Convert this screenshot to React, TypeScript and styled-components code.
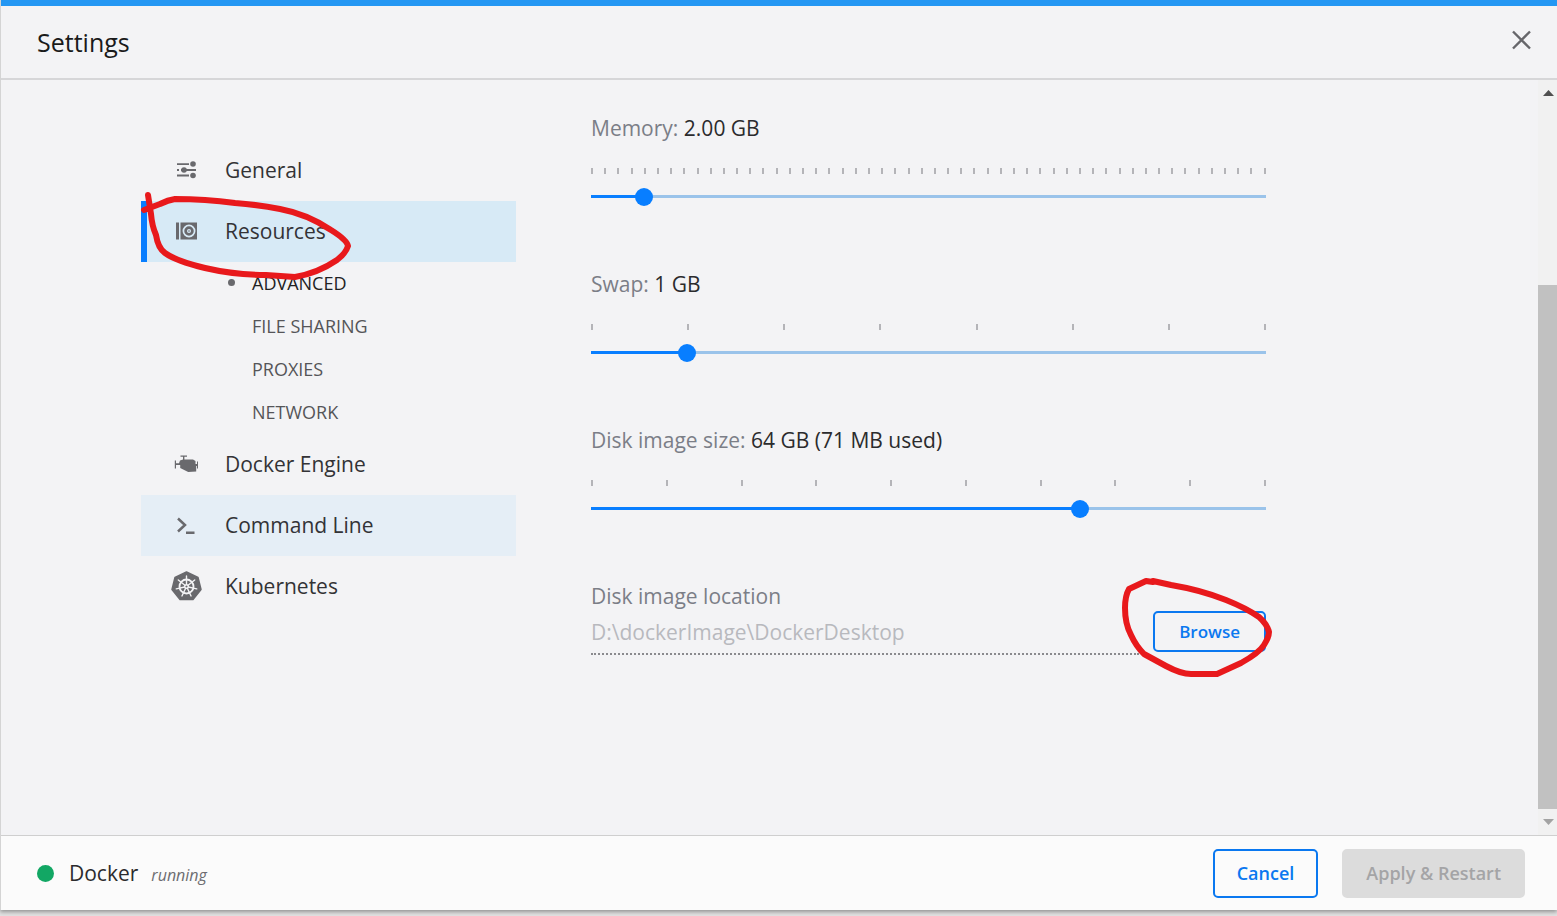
import React, { useState } from 'react';
import styled, { createGlobalStyle, css } from 'styled-components';

const GlobalStyle = createGlobalStyle`
  * { box-sizing: border-box; }
  body {
    margin: 0;
    background: #e2e2e2;
    color: #2b2b2d;
    font-family: 'Open Sans', 'Noto Sans', sans-serif;
    font-size: 21px;
    line-height: 30px;
    font-weight: 400;
  }
  button, input { font-family: inherit; }
`;

const Screen = styled.div`
  min-height: 100vh;
  display: flex;
  flex-direction: column;
  padding-bottom: 6px;
`;

const Window = styled.div`
  flex: 1;
  display: flex;
  flex-direction: column;
  border-left: 1px solid #d4d4d4;
  background: #f3f3f5;
  box-shadow: 0 2px 4px rgba(0, 0, 0, 0.35);
`;

const Header = styled.header`
  display: flex;
  align-items: center;
  justify-content: space-between;
  height: 80px;
  padding: 0 25px 0 36px;
  border-top: 6px solid #2497f3;
  border-bottom: 2px solid #d6d6d8;
`;

const Title = styled.h1`
  margin: 0;
  font-size: 25px;
  line-height: 32px;
  font-weight: 400;
  color: #1a1a1a;
`;

const CloseButton = styled.button`
  display: flex;
  padding: 0 0 5px;
  border: 0;
  background: none;
  color: #66666a;
  cursor: pointer;
`;

const Body = styled.div`
  flex: 1;
  display: flex;
`;

const Content = styled.div`
  flex: 1;
  display: flex;
  gap: 75px;
  padding: 33px 24px 48px 140px;
`;

const Nav = styled.nav`
  flex: 0 0 375px;
  padding-top: 27px;
`;

const List = styled.ul`
  margin: 0;
  padding: 0;
  list-style: none;
`;

const NavItem = styled.li`
  position: relative;
`;

const NavLink = styled.a<{ $state?: 'active' | 'hover' }>`
  display: flex;
  align-items: center;
  height: 61px;
  padding: 0 0 1px 23px;
  border-left: 6px solid transparent;
  color: #333336;
  text-decoration: none;
  ${({ $state }) => $state === 'active' && css`
    background: #d7eaf6;
    border-left-color: #087eff;
  `}
  ${({ $state }) => $state === 'hover' && css`
    background: #e5eef6;
    border-left-color: #e5eef6;
  `}
`;

const NavIcon = styled.svg`
  width: 32px;
  height: 32px;
  margin-right: 23px;
  color: #69696d;
`;

const SubLink = styled.a<{ $current?: boolean }>`
  display: flex;
  align-items: center;
  height: 43px;
  padding: 0 0 2px 111px;
  font-size: 18px;
  line-height: 24px;
  color: ${({ $current }) => ($current ? '#222224' : '#555558')};
  text-decoration: none;
  ${({ $current }) => $current && css`
    padding-left: 87px;
    &::before {
      content: '';
      width: 7px;
      height: 7px;
      margin-right: 17px;
      border-radius: 50%;
      background: #69696d;
    }
  `}
`;

const Panel = styled.main`
  flex: 1;
  max-width: 675px;
`;

const Field = styled.div`
  display: flex;
  flex-direction: column;
  margin-bottom: 63px;
`;

const Label = styled.label`
  color: #7b7e87;
`;

const Value = styled.span`
  color: #2b2b2d;
`;

const Ticks = styled.div`
  display: flex;
  justify-content: space-between;
  margin: 25px 0 14px;
`;

const Tick = styled.span`
  width: 2px;
  height: 6px;
  background: #b4b4b8;
`;

const Range = styled.input<{ $ratio: number }>`
  appearance: none;
  width: calc(100% + 18px);
  height: 18px;
  margin: 0 -9px;
  background: linear-gradient(
    to right,
    transparent 9px,
    #087eff 9px,
    #087eff ${({ $ratio }) => `calc(9px + (100% - 18px) * ${$ratio})`},
    #9ac3ea ${({ $ratio }) => `calc(9px + (100% - 18px) * ${$ratio})`},
    #9ac3ea calc(100% - 9px),
    transparent calc(100% - 9px)
  ) 0 7px / 100% 3px no-repeat;
  cursor: pointer;
  &::-webkit-slider-thumb {
    appearance: none;
    width: 18px;
    height: 18px;
    border-radius: 50%;
    background: #087eff;
  }
`;

const Location = styled.div`
  display: flex;
  align-items: flex-end;
  gap: 14px;
`;

const LocationInput = styled.input`
  flex: 1;
  min-width: 0;
  height: 44px;
  padding: 0;
  border: 0;
  border-bottom: 2px dotted #8a8a8e;
  background: none;
  color: #b8b9be;
  font-size: 21px;
`;

const BrowseWrap = styled.div`
  position: relative;
  display: flex;
  padding-bottom: 3px;
`;

const Button = styled.button<{ $small?: boolean }>`
  height: ${({ $small }) => ($small ? 41 : 49)}px;
  padding: ${({ $small }) => ($small ? '0 24px' : '0 22px')};
  border: 2px solid #0a78f0;
  border-radius: 5px;
  background: transparent;
  color: #0a78f0;
  font-size: ${({ $small }) => ($small ? 17 : 18)}px;
  font-weight: 600;
  cursor: pointer;
  &:disabled {
    border-color: #dcdcdc;
    background: #dcdcdc;
    color: #a4a4a6;
    cursor: default;
  }
`;

const Scrollbar = styled.div`
  display: flex;
  flex-direction: column;
  width: 19px;
  background: #f1f1f1;
`;

const ScrollArrow = styled.svg`
  flex: none;
  width: 19px;
  height: 26px;
`;

const ScrollGap = styled.div`
  flex: 179;
`;

const ScrollThumb = styled.div`
  flex: 525;
  background: #c1c1c1;
`;

const Footer = styled.footer`
  display: flex;
  align-items: center;
  height: 75px;
  padding: 0 32px 0 36px;
  border-top: 1px solid #cfcfcf;
  background: #fbfbfb;
`;

const StatusDot = styled.span`
  width: 17px;
  height: 17px;
  margin-right: 15px;
  border-radius: 50%;
  background: #12a764;
`;

const StatusText = styled.em`
  margin: 4px auto 0 13px;
  font-size: 16px;
  line-height: 22px;
  color: #6c6c70;
`;

const FooterActions = styled.div`
  display: flex;
  gap: 24px;
`;

const Marker = styled.svg<{ $left: number; $top: number }>`
  position: absolute;
  left: ${({ $left }) => $left}px;
  top: ${({ $top }) => $top}px;
  z-index: 2;
  fill: none;
  stroke: #e8191c;
  stroke-width: 6;
  stroke-linecap: round;
  stroke-linejoin: round;
  pointer-events: none;
`;

const GeneralIcon = () => (
  <NavIcon viewBox="0 0 32 32" fill="currentColor" aria-hidden="true">
    <path d="M7 9.200h12v1.800H7zM7 15.100h2v1.800H7zM11 15.100h15v1.800H11zM7 20.600h12v1.800H7z" />
    <circle cx="23" cy="10" r="2.800" />
    <circle cx="14" cy="16" r="2.800" />
    <circle cx="23" cy="21.500" r="2.800" />
  </NavIcon>
);

const ResourcesIcon = () => (
  <NavIcon viewBox="0 0 32 32" aria-hidden="true">
    <path d="M6 7.500h3v17H6zM10.500 7.500h16.500v17H10.500z" fill="currentColor" />
    <circle cx="19" cy="16" r="5.600" fill="none" stroke="#d7eaf6" strokeWidth="1.700" />
    <circle cx="19" cy="16" r="2" fill="#d7eaf6" />
    <circle cx="19" cy="16" r="0.800" fill="currentColor" />
  </NavIcon>
);

const EngineIcon = () => (
  <NavIcon viewBox="0 0 32 32" fill="currentColor" aria-hidden="true">
    <path d="M10.500 7.500h6.500v1.300h-2.600V11.500H23l2.500 1.500v3H27v-2.500h1v7h-1V18h-.8v5.500l-8 .5-8-4V17H6v3.500H4.800v-8H6V15.200h3l1-2.700 3-1V8.800h-2.500z" />
  </NavIcon>
);

const CommandIcon = () => (
  <NavIcon viewBox="0 0 32 32" fill="none" stroke="currentColor" strokeWidth="2.500" aria-hidden="true">
    <path d="M8 9.500l7 6.500-7 6.500M16 23.800h8.500" />
  </NavIcon>
);

const KubernetesIcon = () => (
  <NavIcon viewBox="0 0 32 32" aria-hidden="true">
    <path
      d="M16.500 2l11.500 5.500 3 12-8 10H10l-8-10 3-12z"
      fill="currentColor"
      stroke="currentColor"
      strokeWidth="1.500"
      strokeLinejoin="round"
    />
    <g stroke="#f3f3f5" strokeWidth="1.400" strokeLinecap="round" fill="none">
      <circle cx="16.500" cy="16.500" r="7" strokeWidth="1.800" />
      {[0, 1, 2, 3, 4, 5, 6].map((i) => (
        <path key={i} d="M16.500 14.500V6" transform={`rotate(${(i * 360) / 7} 16.500 16.500)`} />
      ))}
      <circle cx="16.500" cy="16.500" r="1.800" />
    </g>
  </NavIcon>
);

interface SliderProps {
  id: string;
  label: string;
  text: string;
  ticks: number;
  max: number;
  initial: number;
}

function SliderField({ id, label, text, ticks, max, initial }: SliderProps) {
  const [value, setValue] = useState(initial);
  return (
    <Field>
      <Label htmlFor={id}>
        {label}: <Value>{text}</Value>
      </Label>
      <Ticks aria-hidden="true">
        {Array.from({ length: ticks }, (_, i) => (
          <Tick key={i} />
        ))}
      </Ticks>
      <Range
        id={id}
        type="range"
        min={0}
        max={max}
        value={value}
        $ratio={value / max}
        onChange={(e) => setValue(Number(e.target.value))}
      />
    </Field>
  );
}

export default function App() {
  return (
    <Screen>
      <GlobalStyle />
      <Window>
        <Header>
          <Title>Settings</Title>
          <CloseButton type="button" aria-label="Close">
            <svg width="20" height="20" viewBox="0 0 20 20" fill="none" stroke="currentColor" strokeWidth="2.400">
              <path d="M1 1.500l17 17M18 1.500l-17 17" />
            </svg>
          </CloseButton>
        </Header>
        <Body>
          <Content>
            <Nav aria-label="Settings sections">
              <List>
                <NavItem>
                  <NavLink href="#general"><GeneralIcon />General</NavLink>
                </NavItem>
                <NavItem>
                  <NavLink href="#resources" $state="active"><ResourcesIcon />Resources</NavLink>
                  <List>
                    <li><SubLink href="#advanced" $current>ADVANCED</SubLink></li>
                    <li><SubLink href="#file-sharing">FILE SHARING</SubLink></li>
                    <li><SubLink href="#proxies">PROXIES</SubLink></li>
                    <li><SubLink href="#network">NETWORK</SubLink></li>
                  </List>
                  <Marker $left={-1} $top={-11} width="214" height="94" viewBox="140 190 214 94" aria-hidden="true">
                    <path d="M148 195L151 214Q152 226 156 235Q158 248 165 253Q176 261 205 268Q235 275 266 275L295 277Q318 273 337 260Q346 253 348 246Q347 240 331 230Q307 214 280 209Q260 205 235 203Q205 199 175 199Q168 200 160 204L144 210" />
                  </Marker>
                </NavItem>
                <NavItem>
                  <NavLink href="#engine"><EngineIcon />Docker Engine</NavLink>
                </NavItem>
                <NavItem>
                  <NavLink href="#command-line" $state="hover"><CommandIcon />Command Line</NavLink>
                </NavItem>
                <NavItem>
                  <NavLink href="#kubernetes"><KubernetesIcon />Kubernetes</NavLink>
                </NavItem>
              </List>
            </Nav>
            <Panel>
              <SliderField id="memory" label="Memory" text="2.00 GB" ticks={52} max={51} initial={4} />
              <SliderField id="swap" label="Swap" text="1 GB" ticks={8} max={7} initial={1} />
              <SliderField id="disk" label="Disk image size" text="64 GB (71 MB used)" ticks={10} max={1000} initial={725} />
              <Label htmlFor="location">Disk image location</Label>
              <Location>
                <LocationInput id="location" readOnly defaultValue="D:\dockerImage\DockerDesktop" />
                <BrowseWrap>
                  <Button type="button" $small>Browse</Button>
                  <Marker $left={-36} $top={-36} width="160" height="106" viewBox="1116 575 160 106" aria-hidden="true">
                    <path d="M1152 582L1145 581L1128 589Q1124 596 1124 608Q1124 624 1130 635Q1135 646 1143 654L1165 666Q1180 674 1190 674L1216 674L1240 663Q1258 653 1263 645Q1268 637 1268 632Q1266 624 1258 617Q1245 608 1225 600Q1200 590 1170 585L1152 581" />
                  </Marker>
                </BrowseWrap>
              </Location>
            </Panel>
          </Content>
          <Scrollbar aria-hidden="true">
            <ScrollArrow viewBox="0 0 19 26"><path d="M5 16l5.500-6 5.500 6z" fill="#505050" /></ScrollArrow>
            <ScrollGap />
            <ScrollThumb />
            <ScrollArrow viewBox="0 0 19 26"><path d="M5 10l5.500 6 5.500-6z" fill="#a3a3a3" /></ScrollArrow>
          </Scrollbar>
        </Body>
        <Footer>
          <StatusDot />
          Docker
          <StatusText>running</StatusText>
          <FooterActions>
            <Button type="button">Cancel</Button>
            <Button type="button" disabled>Apply &amp; Restart</Button>
          </FooterActions>
        </Footer>
      </Window>
    </Screen>
  );
}
